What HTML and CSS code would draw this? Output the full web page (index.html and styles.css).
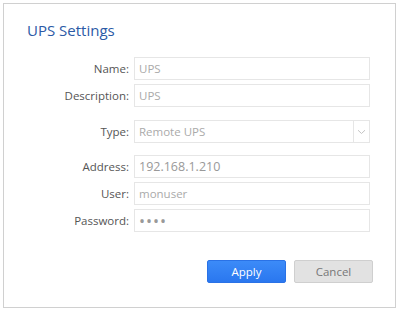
FILE: index.html
```html
<!DOCTYPE html>
<html lang="en">
<head>
  <meta charset="UTF-8">
  <title>UPS Settings</title>
  <link rel="stylesheet" href="styles.css">
</head>
<body>
  <div class="dialog">
    <h1 class="dialog-title">UPS Settings</h1>

    <form class="settings-form">
      <div class="group">
        <div class="row">
          <label for="name">Name:</label>
          <input type="text" id="name" value="UPS">
        </div>
        <div class="row">
          <label for="desc">Description:</label>
          <input type="text" id="desc" value="UPS">
        </div>
      </div>

      <div class="group group-type">
        <div class="row">
          <label for="type">Type:</label>
          <div class="select" id="type">
            <span class="select-value">Remote UPS</span>
            <span class="select-arrow">
              <svg width="9" height="6" viewBox="0 0 9 6"><path d="M1 1.2 L4.5 4.5 L8 1.2" fill="none" stroke="#c4c4c4" stroke-width="1"/></svg>
            </span>
          </div>
        </div>
      </div>

      <div class="group">
        <div class="row">
          <label for="address">Address:</label>
          <input type="text" id="address" class="strong" value="192.168.1.210">
        </div>
        <div class="row">
          <label for="user">User:</label>
          <input type="text" id="user" value="monuser">
        </div>
        <div class="row">
          <label for="password">Password:</label>
          <input type="password" id="password" value="abcd">
        </div>
      </div>

      <div class="actions">
        <button type="button" class="btn btn-primary">Apply</button>
        <button type="button" class="btn btn-default">Cancel</button>
      </div>
    </form>
  </div>
</body>
</html>
```

FILE: styles.css
```css
html, body {
  margin: 0;
  height: 100%;
}

body {
  font-family: "Open Sans", Arial, sans-serif;
  background: #fff;
  padding: 3px;
  box-sizing: border-box;
}

.dialog {
  width: 393px;
  height: 305px;
  box-sizing: border-box;
  border: 1px solid #d0d0d0;
  background: #fff;
}

.dialog-title {
  margin: 0;
  padding: 16px 0 0 23px;
  height: 53px;
  box-sizing: border-box;
  font-size: 15px;
  font-weight: normal;
  line-height: 20px;
  color: #2b5aa6;
}

.settings-form {
  display: flex;
  flex-direction: column;
  gap: 12px;
}

.group {
  display: flex;
  flex-direction: column;
  gap: 4px;
}

.group-type {
  margin-top: 1px;
}

.row {
  display: flex;
  align-items: center;
  gap: 5px;
}

.row label {
  width: 125px;
  text-align: right;
  font-size: 11.5px;
  color: #555;
}

.row input,
.select {
  width: 236px;
  height: 23px;
  box-sizing: border-box;
  border: 1px solid #e6e6e6;
  padding: 0 4px;
  font-family: inherit;
  font-size: 11.5px;
  color: #aaa;
  background: #fff;
  outline: none;
}

.row input.strong {
  color: #999;
  font-size: 12.5px;
}

.row input[type="password"] {
  font-size: 16px;
  letter-spacing: 1px;
  color: #999;
}

.select {
  display: flex;
  align-items: center;
  padding: 0 0 0 4px;
}

.select-value {
  flex: 1;
}

.select-arrow {
  width: 15px;
  height: 100%;
  border-left: 1px solid #e6e6e6;
  display: flex;
  align-items: center;
  justify-content: center;
}

.actions {
  display: flex;
  justify-content: flex-end;
  gap: 8px;
  margin-top: 16px;
  padding-right: 22px;
}

.btn {
  width: 79px;
  height: 23px;
  border-radius: 2px;
  font-family: inherit;
  font-size: 11.5px;
  cursor: pointer;
}

.btn-primary {
  background: linear-gradient(#3c8bf8, #2a77ef);
  border: 1px solid #2a72e6;
  color: #fff;
}

.btn-default {
  background: #e2e2e2;
  border: 1px solid #cfcfcf;
  color: #777;
}
```
